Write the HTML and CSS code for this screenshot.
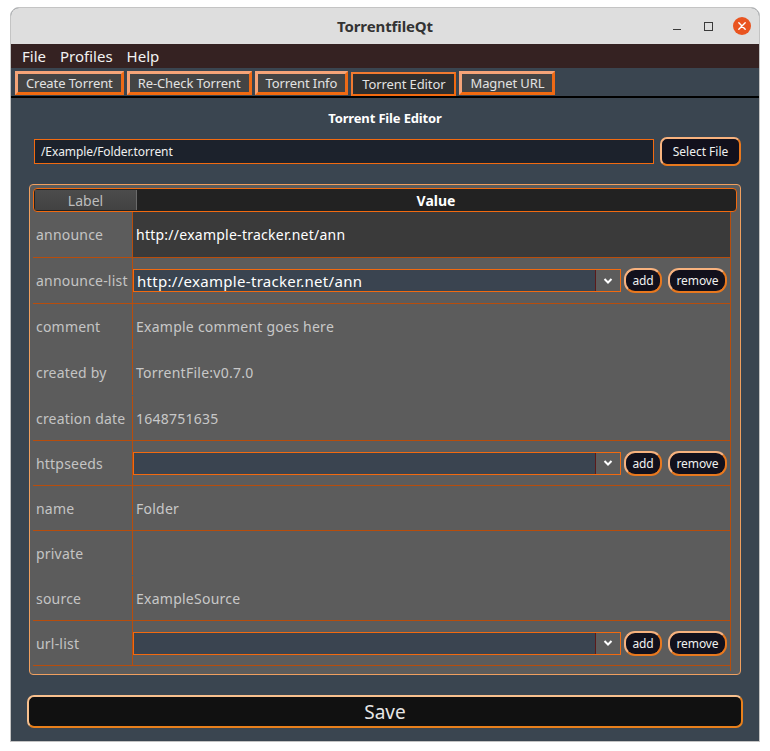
FILE: index.html
```html
<!DOCTYPE html>
<html>
<head>
<meta charset="utf-8">
<link rel="stylesheet" href="styles.css">
</head>
<body>
<div class="window">
  <div class="titlebar">
    <div></div>
    <div class="title">TorrentfileQt</div>
    <div class="controls">
      <span class="ctl-min"></span>
      <span class="ctl-max"></span>
      <span class="ctl-close">
        <svg width="18" height="18" viewBox="0 0 18 18"><circle cx="9" cy="9" r="9" fill="#e95420"/><path d="M5.8 5.8 L12.2 12.2 M12.2 5.8 L5.8 12.2" stroke="#fff" stroke-width="1.4" stroke-linecap="round"/></svg>
      </span>
    </div>
  </div>
  <div class="menubar">
    <span class="menu-item">File</span>
    <span class="menu-item">Profiles</span>
    <span class="menu-item">Help</span>
  </div>
  <div class="tabbar">
    <div class="tab">Create Torrent</div>
    <div class="tab">Re-Check Torrent</div>
    <div class="tab">Torrent Info</div>
    <div class="tab tab-active">Torrent Editor</div>
    <div class="tab">Magnet URL</div>
  </div>
  <div class="tabline"></div>
  <div class="content">
    <div class="heading">Torrent File Editor</div>
    <div class="file-row">
      <div class="line-edit">/Example/Folder.torrent</div>
      <div class="btn btn-select">Select File</div>
    </div>
    <div class="table">
      <div class="table-header">
        <div class="hdr-label">Label</div>
        <div class="hdr-value">Value</div>
      </div>
      <div class="rows">
        <div class="row sep"><div class="cell-label">announce</div><div class="cell-value selected">http://example-tracker.net/ann</div></div>
        <div class="row sep"><div class="cell-label">announce-list</div><div class="cell-value">
          <div class="combo"><span class="combo-text">http://example-tracker.net/ann</span><span class="combo-arrow"><svg width="10" height="8" viewBox="0 0 10 8"><path d="M1.5 2 L5 5.5 L8.5 2" fill="none" stroke="#fff" stroke-width="2"/></svg></span></div>
          <div class="btn btn-small btn-add">add</div><div class="btn btn-small btn-remove">remove</div>
        </div></div>
        <div class="row"><div class="cell-label">comment</div><div class="cell-value">Example comment goes here</div></div>
        <div class="row"><div class="cell-label">created by</div><div class="cell-value">TorrentFile:v0.7.0</div></div>
        <div class="row sep short"><div class="cell-label">creation date</div><div class="cell-value">1648751635</div></div>
        <div class="row sep short"><div class="cell-label">httpseeds</div><div class="cell-value">
          <div class="combo"><span class="combo-text"></span><span class="combo-arrow"><svg width="10" height="8" viewBox="0 0 10 8"><path d="M1.5 2 L5 5.5 L8.5 2" fill="none" stroke="#fff" stroke-width="2"/></svg></span></div>
          <div class="btn btn-small btn-add">add</div><div class="btn btn-small btn-remove">remove</div>
        </div></div>
        <div class="row sep short"><div class="cell-label">name</div><div class="cell-value">Folder</div></div>
        <div class="row short"><div class="cell-label">private</div><div class="cell-value"></div></div>
        <div class="row sep short"><div class="cell-label">source</div><div class="cell-value">ExampleSource</div></div>
        <div class="row sep short"><div class="cell-label">url-list</div><div class="cell-value">
          <div class="combo"><span class="combo-text"></span><span class="combo-arrow"><svg width="10" height="8" viewBox="0 0 10 8"><path d="M1.5 2 L5 5.5 L8.5 2" fill="none" stroke="#fff" stroke-width="2"/></svg></span></div>
          <div class="btn btn-small btn-add">add</div><div class="btn btn-small btn-remove">remove</div>
        </div></div>
        <div class="rows-fill"></div>
      </div>
    </div>
    <div class="btn btn-save">Save</div>
  </div>
</div>
</body>
</html>
```

FILE: styles.css
```css
html, body {
  margin: 0;
  padding: 0;
  background: #ffffff;
  font-family: "Noto Sans", "DejaVu Sans", sans-serif;
}

.window {
  margin: 7px 0 0 10px;
  width: 748px;
  height: 733px;
  border: 1px solid #c4c4c4;
  border-radius: 9px 9px 0 0;
  overflow: hidden;
  display: flex;
  flex-direction: column;
  background: #3a4550;
}

.titlebar {
  height: 36px;
  flex: none;
  background: #dedede;
  display: grid;
  grid-template-columns: 1fr auto 1fr;
  align-items: center;
}

.title {
  font-size: 15px;
  font-weight: bold;
  color: #333333;
  letter-spacing: -0.1px;
}

.controls {
  display: flex;
  justify-content: flex-end;
  align-items: center;
  padding-right: 8px;
}

.ctl-min {
  width: 8px;
  height: 1px;
  background: #3a3a3a;
  margin-top: 7px;
  margin-right: 23px;
}

.ctl-max {
  width: 7px;
  height: 7px;
  border: 1px solid #3a3a3a;
  margin-right: 20px;
}

.ctl-close {
  width: 18px;
  height: 18px;
  display: flex;
}

.menubar {
  height: 24px;
  flex: none;
  background: #352222;
  display: flex;
  align-items: center;
  padding-left: 4px;
}

.menu-item {
  font-size: 15px;
  color: #f2f2f2;
  padding: 0 7px;
}

.tabbar {
  height: 28px;
  flex: none;
  background: #3a4550;
  display: flex;
  align-items: flex-start;
  padding: 3px 0 0 4px;
  box-sizing: border-box;
  gap: 3px;
}

.tab {
  height: 24px;
  box-sizing: border-box;
  padding: 0 8px;
  border: 3px solid;
  border-color: #f5a478 #ee6a16 #f26a10 #f5a478;
  background: #444444;
  color: #e2e2e2;
  font-size: 13px;
  letter-spacing: -0.1px;
  display: flex;
  align-items: center;
}

.tab-active {
  margin-top: 1px;
  border: 2px solid #f26a10;
  border-color: #f07a30 #f26a10 #f26a10 #f07a30;
  background: #2e2e2e;
  padding: 0 9px;
}

.tabline {
  height: 2px;
  flex: none;
  background: #000000;
}

.content {
  flex: 1;
  background: #3a4550;
  padding: 12px 16px 0 16px;
  display: flex;
  flex-direction: column;
}

.heading {
  text-align: center;
  font-size: 13px;
  font-weight: bold;
  color: #ffffff;
  line-height: 16px;
  letter-spacing: -0.15px;
}

.file-row {
  margin: 11px 2px 0 7px;
  display: flex;
  align-items: center;
  gap: 6px;
}

.line-edit {
  flex: 1;
  height: 25px;
  box-sizing: border-box;
  border: 1px solid #f26a10;
  background: #1c222c;
  color: #f0f0f0;
  font-size: 12px;
  display: flex;
  align-items: center;
  padding-left: 6px;
  letter-spacing: -0.1px;
}

.btn {
  box-sizing: border-box;
  border: 2px solid;
  border-color: #f8b27e #e8781e #e8781e #f8b27e;
  background: #12101c;
  color: #f0f0f0;
  display: flex;
  align-items: center;
  justify-content: center;
}

.btn-select {
  width: 81px;
  height: 29px;
  border-radius: 7px;
  font-size: 12px;
}

.table {
  margin: 18px 2px 0 2px;
  height: 491px;
  box-sizing: border-box;
  border: 1px solid #f0a060;
  border-radius: 4px;
  background: #5c5c5c;
  padding: 3px;
  display: flex;
  flex-direction: column;
}

.table-header {
  height: 24px;
  flex: none;
  box-sizing: border-box;
  border: 1px solid #f26a10;
  border-radius: 4px;
  background: #222222;
  display: flex;
  padding: 1px;
}

.hdr-label {
  width: 101px;
  background: linear-gradient(#4c4c4c, #424242);
  border-right: 1px solid #6a6a6a;
  color: #bdbdbd;
  font-size: 14px;
  display: flex;
  align-items: center;
  justify-content: center;
}

.hdr-value {
  flex: 1;
  color: #ffffff;
  font-size: 14px;
  font-weight: bold;
  display: flex;
  align-items: center;
  justify-content: center;
}

.rows {
  flex: 1;
  margin-right: 6px;
  border-right: 1px solid #b84d0c;
  display: flex;
  flex-direction: column;
}

.row {
  height: 46px;
  flex: none;
  box-sizing: border-box;
  display: flex;
  border-bottom: 1px solid transparent;
}

.row.short {
  height: 45px;
}

.row.sep {
  border-bottom-color: #b84d0c;
}

.cell-label {
  width: 100px;
  flex: none;
  border-right: 1px solid #b84d0c;
  color: #c4c4c4;
  font-size: 14px;
  display: flex;
  align-items: center;
  padding-left: 3px;
  box-sizing: border-box;
  letter-spacing: 0.2px;
  white-space: nowrap;
}

.cell-value {
  flex: 1;
  color: #c8c8c8;
  font-size: 14px;
  display: flex;
  align-items: center;
  padding-left: 3px;
  letter-spacing: 0.25px;
}

.cell-value.selected {
  background: #3a3a3a;
  color: #ffffff;
}

.combo {
  margin-left: -3px;
  width: 488px;
  height: 23px;
  box-sizing: border-box;
  border: 1px solid #f26a10;
  background: #3a4450;
  display: flex;
  align-items: stretch;
}

.combo-text {
  flex: 1;
  color: #ffffff;
  font-size: 15px;
  padding-left: 3px;
  display: flex;
  align-items: center;
  letter-spacing: 0.3px;
}

.combo-arrow {
  width: 24px;
  border-left: 1px solid #5a1a1a;
  background: #5c5c5c;
  display: flex;
  align-items: center;
  justify-content: center;
}

.btn-small {
  height: 25px;
  border-radius: 11px;
  font-size: 12px;
  letter-spacing: -0.1px;
}

.btn-add {
  width: 38px;
  margin-left: 3px;
}

.btn-remove {
  width: 59px;
  margin-left: 6px;
}

.rows-fill {
  flex: 1;
}

.btn-save {
  margin-top: 20px;
  height: 33px;
  border-radius: 7px;
  border-color: #f8c08e #e8801c #e8801c #f8c08e;
  background: #111111;
  color: #e6e6e6;
  font-size: 19px;
}
```
